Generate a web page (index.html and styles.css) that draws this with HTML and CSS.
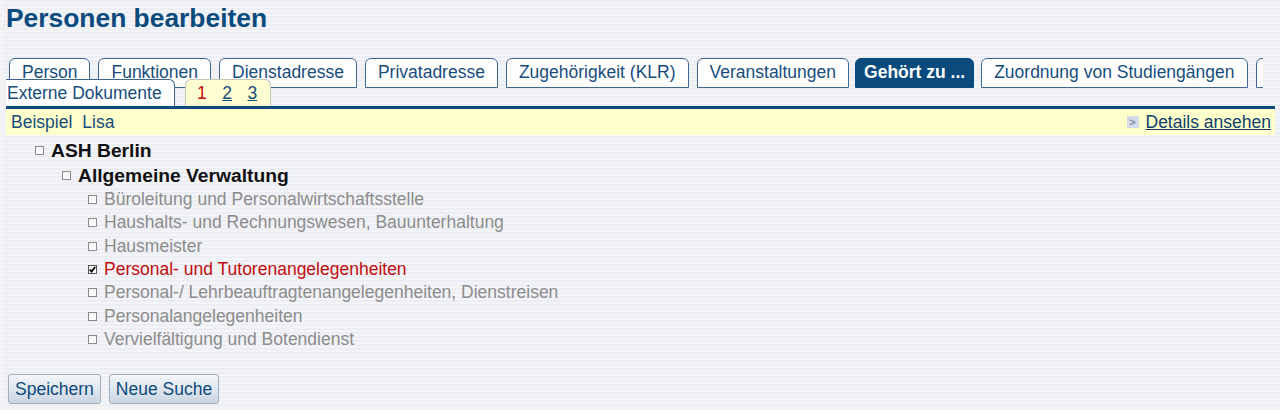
FILE: index.html
```html
<!DOCTYPE html>
<html lang="de">
<head>
<meta charset="utf-8">
<title>Personen bearbeiten</title>
<link rel="stylesheet" href="styles.css">
</head>
<body>
<div class="page">
  <h1 class="title">Personen bearbeiten</h1>

  <div class="tabbar">
    <div class="tabrow">
      <span class="tab">Person</span>
      <span class="tab">Funktionen</span>
      <span class="tab">Dienstadresse</span>
      <span class="tab">Privatadresse</span>
      <span class="tab">Zugehörigkeit (KLR)</span>
      <span class="tab">Veranstaltungen</span>
      <span class="tab tab-active">Gehört zu ...</span>
      <span class="tab">Zuordnung von Studiengängen</span>
      <span class="tab tab-more"></span>
    </div>
    <div class="tabrow2">
      <span class="tab2">Externe Dokumente</span>
      <span class="pager"><span class="cur">1</span><a href="#">2</a><a href="#">3</a></span>
    </div>
  </div>

  <div class="infobar">
    <span class="name">Beispiel<span class="sp"></span>Lisa</span>
    <span class="details"><span class="arrow">&gt;</span><a href="#">Details ansehen</a></span>
  </div>

  <ul class="tree">
    <li class="lvl0"><span class="cb"></span>ASH Berlin</li>
    <li class="lvl1"><span class="cb"></span>Allgemeine Verwaltung</li>
    <li class="lvl2"><span class="cb"></span>Büroleitung und Personalwirtschaftsstelle</li>
    <li class="lvl2"><span class="cb"></span>Haushalts- und Rechnungswesen, Bauunterhaltung</li>
    <li class="lvl2"><span class="cb"></span>Hausmeister</li>
    <li class="lvl2 sel"><span class="cb checked"><svg viewBox="0 0 9 9" width="9" height="9"><path d="M1.8 4.6 L3.6 6.6 L7.2 2" fill="none" stroke="#000" stroke-width="1.8"/></svg></span>Personal- und Tutorenangelegenheiten</li>
    <li class="lvl2"><span class="cb"></span>Personal-/ Lehrbeauftragtenangelegenheiten, Dienstreisen</li>
    <li class="lvl2"><span class="cb"></span>Personalangelegenheiten</li>
    <li class="lvl2"><span class="cb"></span>Vervielfältigung und Botendienst</li>
  </ul>

  <div class="buttons">
    <button class="btn">Speichern</button>
    <button class="btn">Neue Suche</button>
  </div>
</div>
</body>
</html>
```

FILE: styles.css
```css
html, body {
  margin: 0;
  padding: 0;
}
body {
  background: #f3f3f6;
  font-family: "Liberation Sans", Arial, sans-serif;
  font-size: 17.5px;
  height: 410px;
  overflow: hidden;
}
.page {
  margin-left: 3px;
  padding: 0 5px 0 3px;
  height: 406px;
  box-sizing: border-box;
  border-bottom-left-radius: 6px;
  background: repeating-linear-gradient(to bottom, #eceef3 0, #eceef3 2px, #f3f4f8 2px, #f3f4f8 4px);
}
.title {
  margin: 0;
  padding: 4px 0 0 0;
  font-size: 26.4px;
  line-height: 28px;
  font-weight: bold;
  color: #0a4a7c;
}
.tabbar {
  margin-top: 26px;
}
.tabrow {
  display: flex;
  gap: 8px;
  margin-left: 3px;
  width: 1254px;
  overflow: hidden;
  height: 30px;
}
.tab {
  flex: none;
  box-sizing: border-box;
  height: 30px;
  padding: 3px 12px 0;
  line-height: 20px;
  background: #fff;
  border: 1px solid #3d6690;
  border-radius: 6px 6px 0 0;
  color: #174d7c;
  white-space: nowrap;
}
.tab-active {
  margin: 0 -1px 0 -2px;
  padding: 3px 8px 0;
  background: #0a4a7c;
  border-color: #0a4a7c;
  color: #fff;
  font-weight: bold;
}
.tab-more {
  width: 30px;
}
.tabrow2 {
  display: flex;
  gap: 10px;
  margin-top: -9px;
  height: 27px;
  position: relative;
}
.tab2 {
  box-sizing: border-box;
  height: 27px;
  width: 169px;
  padding: 3px 0 0 1px;
  line-height: 20px;
  background: #fff;
  border: 1px solid #3d6690;
  border-left: none;
  border-bottom: none;
  border-radius: 0 6px 0 0;
  color: #174d7c;
  white-space: nowrap;
}
.pager {
  box-sizing: border-box;
  height: 27px;
  width: 86px;
  padding: 3px 0 0 11px;
  line-height: 20px;
  background: #fefed2;
  border: 1px solid #c6c7b6;
  border-bottom: none;
  border-radius: 6px 6px 0 0;
  display: flex;
  gap: 15.5px;
}
.pager .cur {
  color: #c20c0c;
}
.pager a {
  color: #174d7c;
  text-decoration: underline;
}
.infobar {
  border-top: 3px solid #0e4a7b;
  background: #ffffcc;
  height: 26px;
  line-height: 26px;
  padding: 0 4px 0 5px;
  display: flex;
  justify-content: space-between;
  color: #174d7c;
}
.sp {
  display: inline-block;
  width: 10px;
}
.details {
  display: flex;
  align-items: center;
  gap: 7px;
}
.arrow {
  display: inline-flex;
  align-items: center;
  justify-content: center;
  width: 12px;
  height: 12px;
  background: #d5dbe9;
  color: #8090a8;
  font-size: 11px;
  font-weight: bold;
  line-height: 12px;
}
.details a {
  color: #0f3f6e;
  text-decoration: underline;
}
.tree {
  list-style: none;
  margin: 0;
  padding: 3px 0 0 0;
}
.tree li {
  display: flex;
  align-items: center;
  white-space: nowrap;
}
.cb {
  display: inline-flex;
  box-sizing: border-box;
  width: 9px;
  height: 9px;
  border: 1px solid #8a8a8a;
  background: linear-gradient(to bottom, #f4f4f4, #fff);
  margin-right: 7px;
  flex: none;
}
.cb.checked {
  border-color: #555;
}
.cb svg {
  margin: -1px;
}
.lvl0 {
  padding-left: 29px;
  height: 25px;
  font-size: 19.25px;
  font-weight: bold;
  color: #111;
}
.lvl1 {
  padding-left: 56px;
  height: 25px;
  font-size: 19.25px;
  font-weight: bold;
  color: #111;
}
.lvl2 {
  padding-left: 82px;
  height: 23.3px;
  color: #8c8c8c;
}
.lvl2.sel {
  color: #c00d0d;
}
.buttons {
  display: flex;
  gap: 8px;
  margin-top: 23px;
  padding-left: 2px;
}
.btn {
  font-family: "Liberation Sans", Arial, sans-serif;
  font-size: 17.5px;
  height: 30px;
  padding: 0 6px;
  color: #0f4a7a;
  background: linear-gradient(to bottom, #f3f6fa 0%, #dde5ee 55%, #c9d4e0 100%);
  border: 1px solid #a4adb8;
  border-radius: 3px;
}
```
